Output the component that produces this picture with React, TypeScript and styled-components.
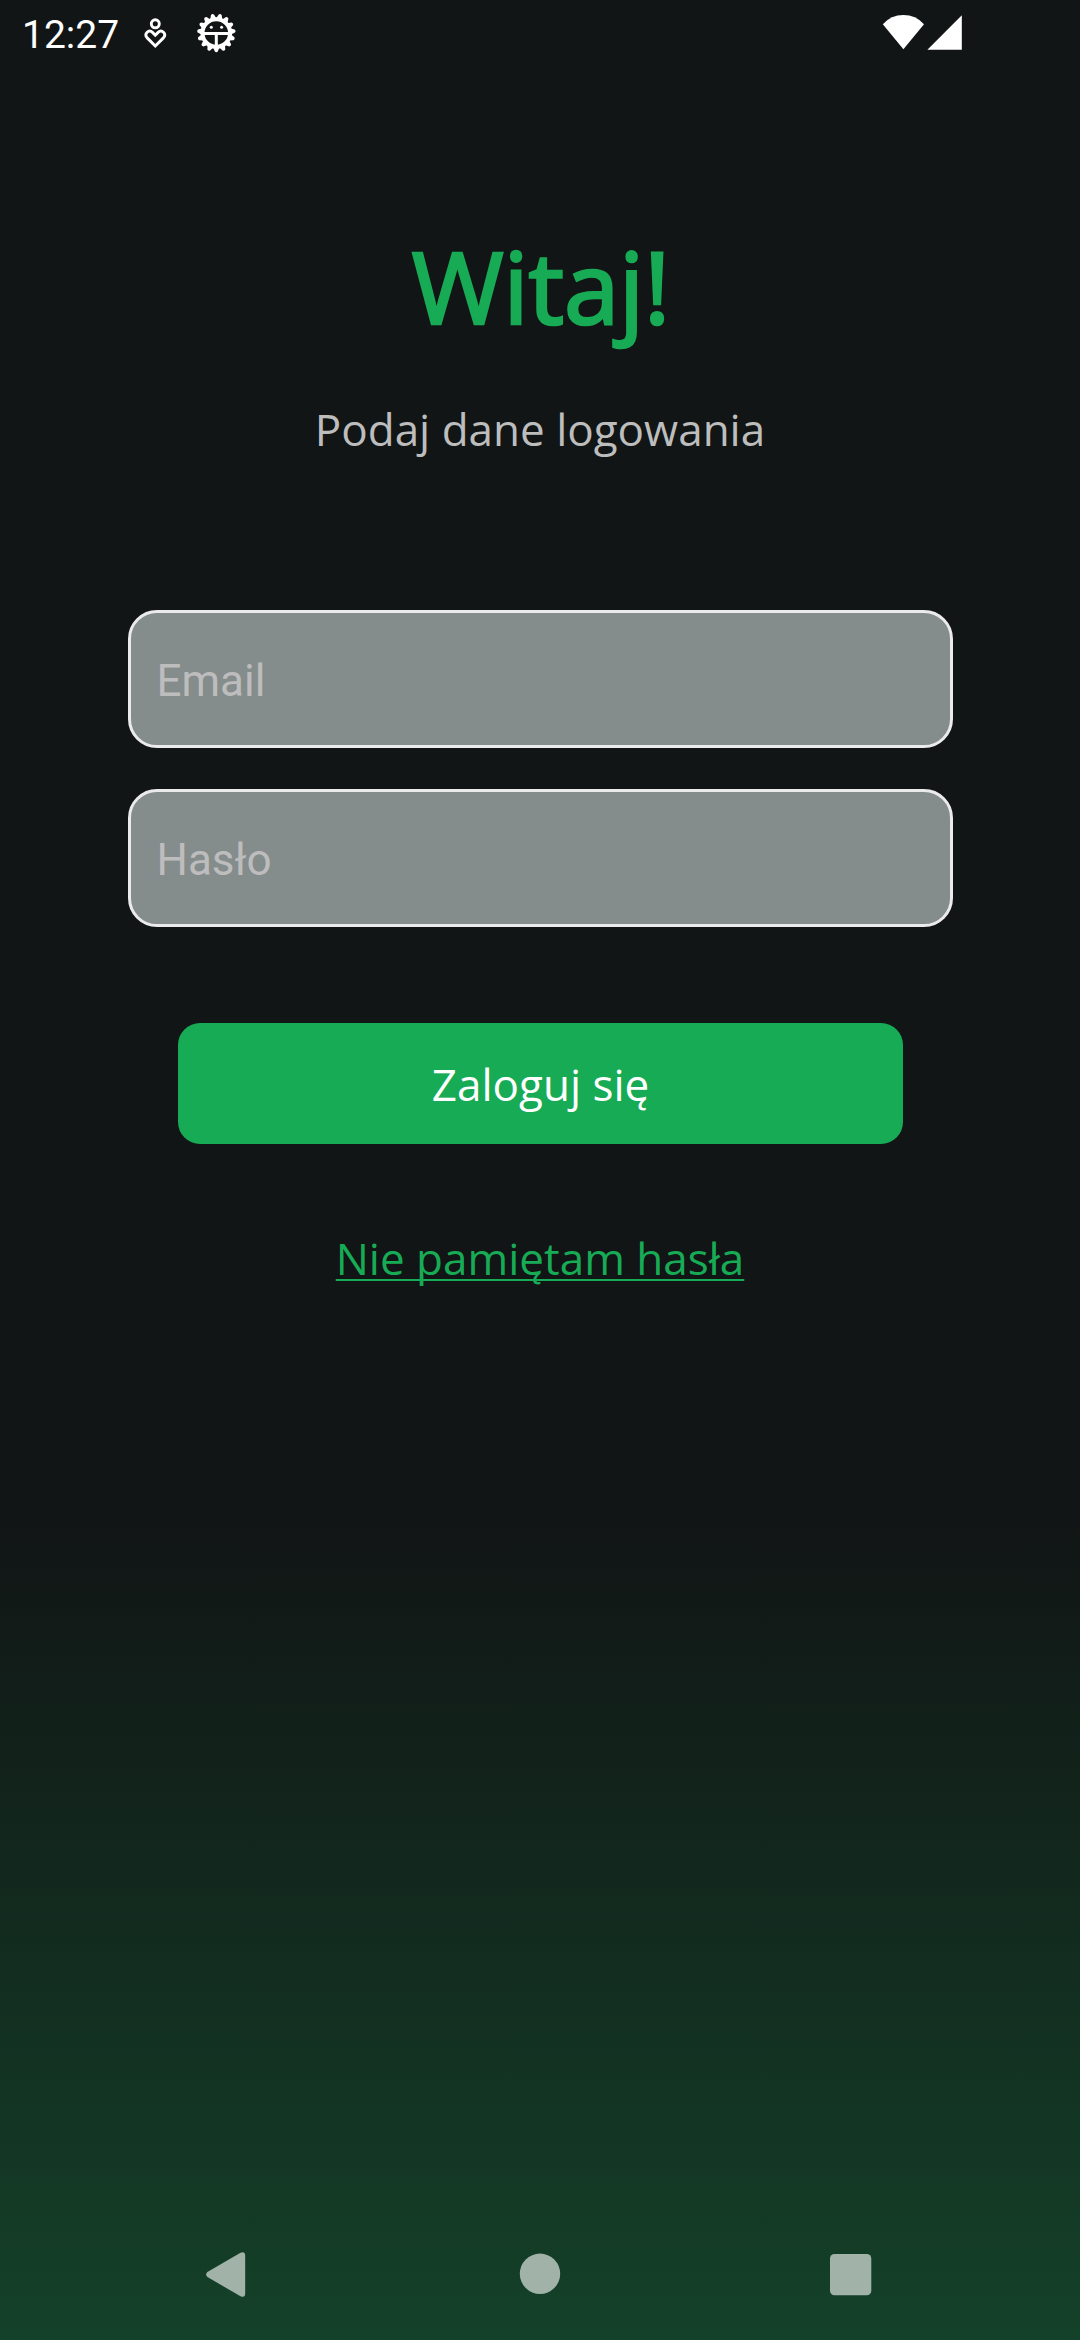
import React from "react";
import styled, { createGlobalStyle } from "styled-components";

const GlobalStyle = createGlobalStyle`
  * { box-sizing: border-box; }
  body { margin: 0; background: #111515; }
`;

const Screen = styled.div`
  width: 1080px;
  height: 2340px;
  display: flex;
  flex-direction: column;
  overflow: hidden;
  background: linear-gradient(180deg, #111515 0%, #111515 65%, #144129 100%);
  font-family: "Open Sans", sans-serif;
`;

const StatusBar = styled.header`
  height: 66px;
  padding: 0 118px 0 22px;
  display: flex;
  align-items: center;
  color: #fff;
`;

const Clock = styled.span`
  width: 121px;
  padding-top: 3px;
  font: 400 39px/66px Roboto, sans-serif;
`;

const Spacer = styled.div`
  flex: 1;
`;

const Main = styled.main`
  flex: 1;
  display: flex;
  flex-direction: column;
  align-items: center;
`;

const Title = styled.h1`
  margin: 149px 0 0;
  padding-left: 2px;
  font-size: 99.5px;
  line-height: 142px;
  font-weight: 400;
  letter-spacing: -0.1px;
  color: #18ab55;
  -webkit-text-stroke: 2.7px #18ab55;
`;

const Subtitle = styled.p`
  margin: 42px 0 0;
  font-size: 44px;
  line-height: 60px;
  color: #bdbdbd;
`;

const Form = styled.form`
  margin-top: 151px;
  width: 825px;
  display: flex;
  flex-direction: column;
  align-items: center;
  gap: 41px;
`;

const Field = styled.input`
  width: 100%;
  height: 138px;
  padding: 4px 26px 0;
  border: 3px solid #ebebeb;
  border-radius: 29px;
  outline: none;
  background: #858c8c;
  color: #fff;
  font: 400 44px Roboto, sans-serif;
  &::placeholder {
    color: #bdbdbd;
    opacity: 1;
  }
`;

const Submit = styled.button`
  margin-top: 55px;
  width: 725px;
  height: 121px;
  padding: 1px 0 0 1px;
  border: 0;
  border-radius: 22px;
  background: #18ab55;
  color: #fff;
  font: 400 44px "Open Sans", sans-serif;
`;

const ForgotLink = styled.a`
  margin-top: 84px;
  font-size: 44px;
  line-height: 60px;
  color: #18ab55;
  text-decoration: underline;
  text-decoration-thickness: 2.4px;
  text-underline-offset: 4px;
  text-decoration-skip-ink: none;
`;

const NavBar = styled.nav`
  height: 132px;
  padding-left: 205px;
  display: flex;
  align-items: center;
`;

const Glyph = styled.svg<{ $gap?: number }>`
  display: block;
  flex: none;
  margin-right: ${({ $gap = 0 }) => $gap}px;
`;

const PersonHeart = () => (
  <Glyph $gap={29} width="24" height="66" viewBox="143 0 24 66" fill="none" stroke="#fff" strokeWidth="2.9">
    <circle cx="155.3" cy="23.8" r="4" />
    <path d="M155.3 46 L147.2 37.9 C143.6 33.8 148.8 29 152.5 32.4 L155.3 35.2 L158.1 32.4 C161.8 29 167 33.8 163.4 37.9 Z" />
  </Glyph>
);

const TEETH = Array.from({ length: 15 }, (_, i) => 12 + i * 24);

const DroidGear = () => (
  <Glyph width="40" height="66" viewBox="196 0 40 66">
    <g fill="none" stroke="#fff">
      <circle cx="216.3" cy="33" r="13.8" strokeWidth="4" />
      <path d="M203 33.4H230M216.3 33V46" strokeWidth="3" />
    </g>
    <g fill="#fff">
      <circle cx="211.3" cy="27.3" r="1.5" />
      <circle cx="221.6" cy="27.3" r="1.5" />
      {TEETH.map((angle) => (
        <path key={angle} d="M213 19 L214.8 14.4 Q216.3 13 217.8 14.4 L219.6 19Z" transform={`rotate(${angle} 216.3 33)`} />
      ))}
    </g>
  </Glyph>
);

const Signals = () => (
  <Glyph width="80" height="66" viewBox="882 0 80 66" fill="#fff">
    <path d="M882.8 24.2 Q891 15 903.4 15 Q915.8 15 924 24.2 L903.4 49.3Z" />
    <path d="M961.8 15.3V49.7H927.4Z" />
  </Glyph>
);

const App = () => (
  <>
    <GlobalStyle />
    <Screen>
      <StatusBar>
        <Clock>12:27</Clock>
        <PersonHeart />
        <DroidGear />
        <Spacer />
        <Signals />
      </StatusBar>
      <Main>
        <Title>Witaj!</Title>
        <Subtitle>Podaj dane logowania</Subtitle>
        <Form>
          <Field type="email" placeholder="Email" />
          <Field type="password" placeholder="Hasło" />
          <Submit type="button">Zaloguj się</Submit>
        </Form>
        <ForgotLink>Nie pamiętam hasła</ForgotLink>
      </Main>
      <NavBar>
        <Glyph $gap={272} width="42" height="48" viewBox="205 2250 42 48" fill="#a1b3a9">
          <path d="M207.4 2272 L240.5 2252.8 Q245.2 2250.8 245.2 2256 V2293 Q245.2 2298.3 240.5 2296.3 L207.4 2277 Q204.8 2274.5 207.4 2272Z" />
        </Glyph>
        <Glyph $gap={268} width="42" height="48" viewBox="519 2250 42 48" fill="#a1b3a9">
          <circle cx="540" cy="2273.8" r="20.2" />
        </Glyph>
        <Glyph width="44" height="48" viewBox="829 2250 44 48" fill="#a1b3a9">
          <rect x="830" y="2254" width="41.3" height="41.3" rx="4.5" />
        </Glyph>
      </NavBar>
    </Screen>
  </>
);

export default App;
